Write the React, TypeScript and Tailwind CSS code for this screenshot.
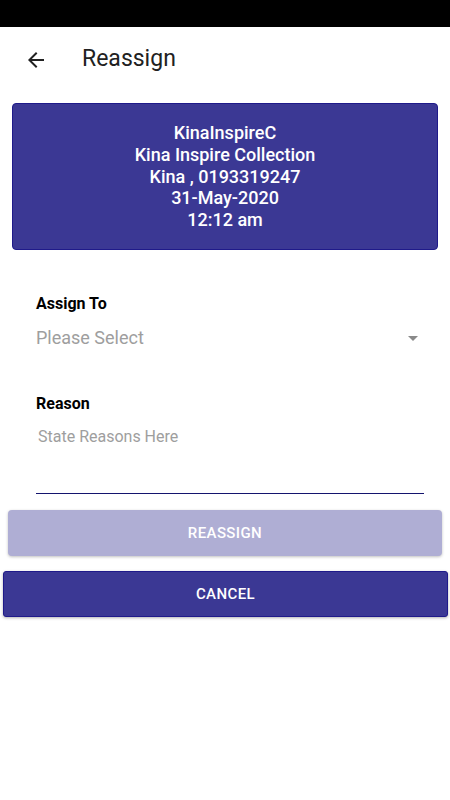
import React from "react";

export default function App() {
  return (
    <div className="w-[450px] h-[800px] bg-white flex flex-col" style={{ fontFamily: "Roboto, 'Noto Sans', sans-serif" }}>
      <div className="h-[27px] bg-black" />
      <div className="h-[65px] flex items-center">
        <div className="w-6 h-6 ml-6 flex items-center justify-center">
          <svg width="24" height="24" viewBox="0 0 24 24">
            <path d="M20 11H7.83l5.59-5.59L12 4l-8 8 8 8 1.41-1.41L7.83 13H20v-2z" fill="#212121" />
          </svg>
        </div>
        <div className="ml-[34px] text-[23px] text-[#212121] font-normal">Reassign</div>
      </div>
      <div className="mt-[11px] mx-3 h-[147px] rounded-[4px] bg-[#3b3894] border border-[#1f1a8a] flex flex-col items-center justify-center text-white text-[18px] leading-[21.75px] font-medium">
        <div>KinaInspireC</div>
        <div>Kina Inspire Collection</div>
        <div>Kina , 0193319247</div>
        <div>31-May-2020</div>
        <div>12:12 am</div>
      </div>
      <div className="pl-9 pr-[26px] flex flex-col">
        <div className="mt-[45px] text-[16px] leading-[18px] font-bold text-black">Assign To</div>
        <div className="mt-[14px] flex items-center justify-between h-[22px]">
          <span className="text-[18px] leading-[22px] text-[#9e9e9e]">Please Select</span>
          <svg width="10" height="5" viewBox="0 0 10 5" className="mr-[6px]">
            <path d="M0 0h10L5 5z" fill="#8a8a8a" />
          </svg>
        </div>
        <div className="mt-[46px] text-[16px] leading-[18px] font-bold text-black">Reason</div>
        <div className="h-[81px] border-b border-[#14146e] pl-[2px]">
          <div className="mt-[15px] text-[16px] leading-[18px] text-[#9e9e9e]">State Reasons Here</div>
        </div>
      </div>
      <div className="mt-4 mx-2 h-[46px] rounded-[4px] bg-[#afaed4] shadow-[0_1px_3px_rgba(0,0,0,0.25)] flex items-center justify-center text-white text-[15px] font-medium tracking-[0.4px]">
        REASSIGN
      </div>
      <div className="mt-[15px] ml-[3px] mr-[2px] h-[46px] rounded-[3px] bg-[#3b3894] border border-[#1f1a8a] shadow-[0_1px_3px_rgba(0,0,0,0.3)] flex items-center justify-center text-white text-[15px] font-medium tracking-[0.4px]">
        CANCEL
      </div>
    </div>
  );
}
